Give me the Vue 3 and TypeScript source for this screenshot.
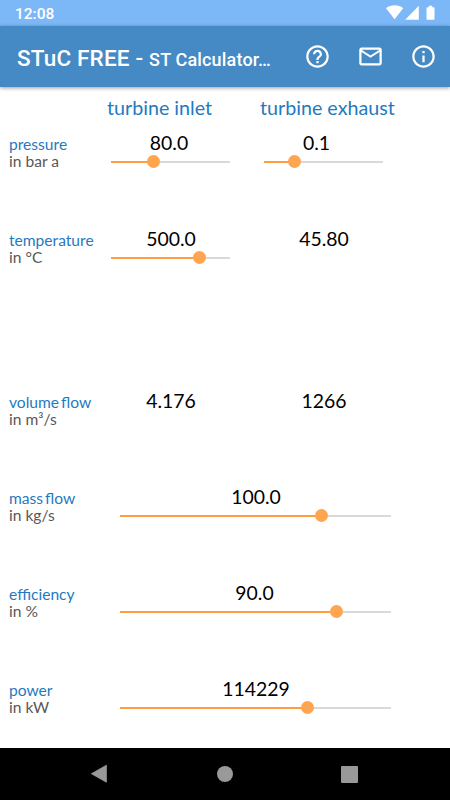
<script setup lang="ts">
interface Field {
  value: string
  kind: 'inlet' | 'exhaust' | 'wide'
  percent?: number
  trim?: number
}
interface Row {
  name: string
  unit: string
  tall?: boolean
  fields: Field[]
}

const rows: Row[] = [
  {
    name: 'pressure',
    unit: 'in bar a',
    fields: [
      { value: '80.0', kind: 'inlet', percent: 36, trim: 4 },
      { value: '0.1', kind: 'exhaust', percent: 26, trim: 15 },
    ],
  },
  {
    name: 'temperature',
    unit: 'in °C',
    tall: true,
    fields: [
      { value: '500.0', kind: 'inlet', percent: 74 },
      { value: '45.80', kind: 'exhaust' },
    ],
  },
  {
    name: 'volume flow',
    unit: 'in m³/s',
    fields: [
      { value: '4.176', kind: 'inlet' },
      { value: '1266', kind: 'exhaust' },
    ],
  },
  { name: 'mass flow', unit: 'in kg/s', fields: [{ value: '100.0', kind: 'wide', percent: 74.2 }] },
  { name: 'efficiency', unit: 'in %', fields: [{ value: '90.0', kind: 'wide', percent: 80, trim: 3 }] },
  { name: 'power', unit: 'in kW', fields: [{ value: '114229', kind: 'wide', percent: 69.2 }] },
]
</script>

<template>
  <div class="screen">
    <div class="status">
      <span class="clock">12:08</span>
      <svg class="signals" width="52" height="16" viewBox="0 0 52 16" fill="#fff">
        <path d="M0 3.200C5-.6 12.500-.6 17.200 3.200L8.600 14.200Z" />
        <path d="M32.800 .7V14.800H19.200Z" />
        <path d="M42.800 .700h3.400v1.500h1.500q.8 0 .8.8v11q0 .8-.8.800h-6.400q-.8 0-.8-.800v-11q0-.8.8-.800h1.500z" />
      </svg>
    </div>
    <header class="bar">
      <h1 class="title">STuC FREE - <small>ST Calculator…</small></h1>
      <nav class="actions">
        <svg viewBox="0 0 24 24"><path d="M11 18h2v-2h-2v2zm1-16C6.480 2 2 6.480 2 12s4.480 10 10 10 10-4.480 10-10S17.520 2 12 2zm0 18c-4.410 0-8-3.590-8-8s3.590-8 8-8 8 3.590 8 8-3.590 8-8 8zm0-14c-2.210 0-4 1.790-4 4h2c0-1.100.9-2 2-2s2 .9 2 2c0 2-3 1.750-3 5h2c0-2.250 3-2.500 3-5 0-2.210-1.790-4-4-4z" /></svg>
        <svg viewBox="0 0 24 24"><path d="M22 6c0-1.100-.9-2-2-2H4c-1.100 0-2 .9-2 2v12c0 1.100.9 2 2 2h16c1.100 0 2-.9 2-2V6zm-2 0-8 5-8-5h16zm0 12H4V8l8 5 8-5v10z" /></svg>
        <svg viewBox="0 0 24 24"><path d="M11 7h2v2h-2V7zm0 4h2v6h-2v-6zm1-9C6.480 2 2 6.480 2 12s4.480 10 10 10 10-4.480 10-10S17.520 2 12 2zm0 18c-4.410 0-8-3.590-8-8s3.590-8 8-8 8 3.590 8 8-3.590 8-8 8z" /></svg>
      </nav>
    </header>
    <main class="content">
      <div class="heads">
        <span class="head-inlet">turbine inlet</span>
        <span class="head-exhaust">turbine exhaust</span>
      </div>
      <section v-for="row in rows" :key="row.name" class="row" :class="{ tall: row.tall }">
        <div class="label">
          <div class="name">{{ row.name }}</div>
          <div class="unit">{{ row.unit }}</div>
        </div>
        <div v-for="field in row.fields" :key="field.kind" class="field" :class="field.kind">
          <div class="value" :style="{ paddingRight: (field.trim ?? 0) + 'px' }">{{ field.value }}</div>
          <div v-if="field.percent !== undefined" class="slider">
            <div class="filled" :style="{ width: field.percent + '%' }"></div>
            <div class="thumb"></div>
            <div class="rest"></div>
          </div>
        </div>
      </section>
    </main>
    <footer class="navbar">
      <svg width="18" height="20" viewBox="0 0 18 20"><path d="M16.400 1.200V18.200L1.400 9.700Z" fill="#999" stroke="#999" stroke-width=".8" stroke-linejoin="round" /></svg>
      <span class="home"></span>
      <span class="recent"></span>
    </footer>
  </div>
</template>

<style>
body {
  background: #fff;
}
</style>

<style scoped>
.screen {
  width: 450px;
  height: 800px;
  display: flex;
  flex-direction: column;
  overflow: hidden;
  background: #fff;
  font-family: Lato, "Liberation Sans", sans-serif;
}
.status {
  height: 26px;
  flex: none;
  display: flex;
  justify-content: space-between;
  padding: 0 15px;
  background: #7cb7f7;
  color: #fff;
}
.clock {
  font: 500 15.500px/28px Roboto, sans-serif;
}
.signals {
  margin: 5px -3px 0 0;
}
.bar {
  height: 61px;
  flex: none;
  display: flex;
  align-items: center;
  justify-content: space-between;
  padding: 0 13px 0 17px;
  box-sizing: border-box;
  background: #458ac4;
  color: #fff;
  box-shadow: 0 1px 4px rgba(0, 0, 0, 0.4);
  z-index: 1;
}
.title {
  margin: 4px 0 0;
  font: 500 22.500px/30px Roboto, sans-serif;
  letter-spacing: 0.17px;
  white-space: nowrap;
}
.title small {
  font-size: 18px;
}
.actions {
  display: flex;
  gap: 26px;
}
.actions svg {
  width: 27px;
  height: 27px;
  fill: #fff;
}
.content {
  flex: 1;
  min-height: 0;
}
.heads {
  height: 37px;
  display: grid;
  grid-template-columns: 107px 153px 1fr;
  color: #1f7ac0;
  font-size: 19.700px;
  line-height: 41px;
}
.head-inlet {
  grid-column: 2;
}
.row {
  height: 96px;
  display: grid;
  grid-template-columns: 102px 9px 110px 34px 119px 8px;
  padding-left: 9px;
}
.row.tall {
  height: 162px;
}
.label {
  grid-column: 1;
  padding-top: 12px;
  font-size: 15.600px;
  line-height: 17px;
  white-space: nowrap;
}
.name {
  color: #1f7ac0;
  word-spacing: -2px;
}
.unit {
  color: #585858;
}
.field {
  grid-row: 1;
}
.inlet {
  grid-column: 2 / 4;
}
.exhaust {
  grid-column: 5;
}
.wide {
  grid-column: 3 / 7;
}
.value {
  height: 30px;
  padding-top: 7px;
  padding-left: 1px;
  box-sizing: border-box;
  color: #000;
  font-size: 19.400px;
  line-height: 23px;
  text-align: center;
}
.slider {
  height: 15px;
  display: flex;
  align-items: center;
}
.filled {
  height: 2px;
  flex: none;
  background: #ff9f40;
}
.rest {
  height: 2px;
  flex: 1;
  background: #d9d9d9;
}
.thumb {
  width: 13px;
  height: 13px;
  flex: none;
  margin: 0 -6.500px;
  border-radius: 50%;
  background: #ffa54f;
  z-index: 1;
}
.navbar {
  height: 52px;
  flex: none;
  display: flex;
  align-items: center;
  justify-content: space-between;
  padding: 0 92px 0 90px;
  box-sizing: border-box;
  background: #000;
}
.home {
  width: 16px;
  height: 16px;
  border-radius: 50%;
  background: #999;
}
.recent {
  width: 17px;
  height: 17px;
  border-radius: 1px;
  background: #999;
}
</style>
